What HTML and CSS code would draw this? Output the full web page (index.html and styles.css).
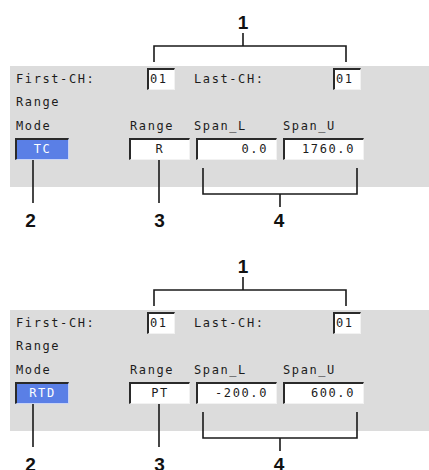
FILE: index.html
```html
<!DOCTYPE html>
<html lang="en">
<head>
    <meta charset="UTF-8">
    <meta name="viewport" content="width=device-width, initial-scale=1.0">
    <title>Range settings</title>
    <link rel="stylesheet" href="styles.css">
</head>
<body>
    <div class="figure">
        <svg class="callouts" width="429" height="244" viewBox="0 0 429 244">
            <path d="M154 62 V46 H346 V62 M243 33 V46" />
            <path d="M33 160 V203 M159 160 V203" />
            <path d="M203 168 V194 H357 V168 M280 194 V207" />
            <text x="243" y="29">1</text>
            <text x="30.5" y="227">2</text>
            <text x="159.5" y="227">3</text>
            <text x="279" y="227">4</text>
        </svg>
        <div class="panel">
            <div class="ch-row">
                <span class="lbl first">First-CH:</span>
                <span class="field ch">01</span>
                <span class="lbl last">Last-CH:</span>
                <span class="field ch">01</span>
            </div>
            <div class="lbl line">Range</div>
            <div class="grid">
                <span class="lbl">Mode</span>
                <span class="lbl">Range</span>
                <span class="lbl">Span_L</span>
                <span class="lbl span-u">Span_U</span>
                <span class="field mode">TC</span>
                <span class="field range">R</span>
                <span class="field num span-l">0.0</span>
                <span class="field num">1760.0</span>
            </div>
        </div>
    </div>

    <div class="figure">
        <svg class="callouts" width="429" height="244" viewBox="0 0 429 244">
            <path d="M154 62 V46 H346 V62 M243 33 V46" />
            <path d="M33 160 V203 M159 160 V203" />
            <path d="M203 168 V194 H357 V168 M280 194 V207" />
            <text x="243" y="29">1</text>
            <text x="30.5" y="227">2</text>
            <text x="159.5" y="227">3</text>
            <text x="279" y="227">4</text>
        </svg>
        <div class="panel">
            <div class="ch-row">
                <span class="lbl first">First-CH:</span>
                <span class="field ch">01</span>
                <span class="lbl last">Last-CH:</span>
                <span class="field ch">01</span>
            </div>
            <div class="lbl line">Range</div>
            <div class="grid">
                <span class="lbl">Mode</span>
                <span class="lbl">Range</span>
                <span class="lbl">Span_L</span>
                <span class="lbl span-u">Span_U</span>
                <span class="field mode">RTD</span>
                <span class="field range">PT</span>
                <span class="field num span-l">-200.0</span>
                <span class="field num">600.0</span>
            </div>
        </div>
    </div>
</body>
</html>
```

FILE: styles.css
```css
body {
    margin: 0;
    background-color: #fff;
    font-family: "DejaVu Sans Mono", monospace;
    font-size: 12px;
    color: #1c1c1c;
}

.figure {
    position: relative;
    height: 244px;
    padding-top: 66px;
    box-sizing: border-box;
    overflow: hidden;
}

.callouts {
    position: absolute;
    top: 0;
    left: 0;
    z-index: 2;
}

.callouts path {
    fill: none;
    stroke: #1a1a1a;
    stroke-width: 1.6;
}

.callouts text {
    font-family: "Liberation Sans", Arial, sans-serif;
    font-weight: bold;
    font-size: 19px;
    text-anchor: middle;
    fill: #111;
}

.panel {
    margin-left: 10px;
    height: 121px;
    padding: 2px 0 0 5px;
    box-sizing: border-box;
    background-color: #dcdcdc;
}

.lbl {
    letter-spacing: 1.6px;
    padding-left: 1px;
    white-space: nowrap;
}

.ch-row {
    display: flex;
    height: 22px;
    align-items: center;
}

.first {
    width: 131px;
}

.last {
    width: 139px;
    margin-left: 18px;
}

.line {
    height: 24px;
    line-height: 24px;
}

.grid {
    display: grid;
    grid-template-columns: 114px 64px 90px 81px;
    grid-template-rows: 24px 22px;
    align-items: center;
}

.span-u {
    padding-left: 0;
}

.field {
    display: block;
    height: 22px;
    box-sizing: border-box;
    background-color: #fff;
    border-top: 2px solid #2a2a2a;
    border-left: 2px solid #2a2a2a;
    border-right: 1px solid #f2f2f2;
    border-bottom: 1px solid #f2f2f2;
    line-height: 19px;
    letter-spacing: 1.6px;
    white-space: nowrap;
}

.ch {
    width: 28px;
    padding-left: 1px;
}

.mode {
    width: 54px;
    text-align: center;
    color: #fff;
    background-color: #5a7fe6;
    border-right-color: #c8d4f6;
    border-bottom-color: #c8d4f6;
}

.range {
    width: 61px;
    text-align: center;
}

.num {
    width: 81px;
    text-align: right;
    padding-right: 8px;
}

.span-l {
    margin-left: 3px;
}
```
